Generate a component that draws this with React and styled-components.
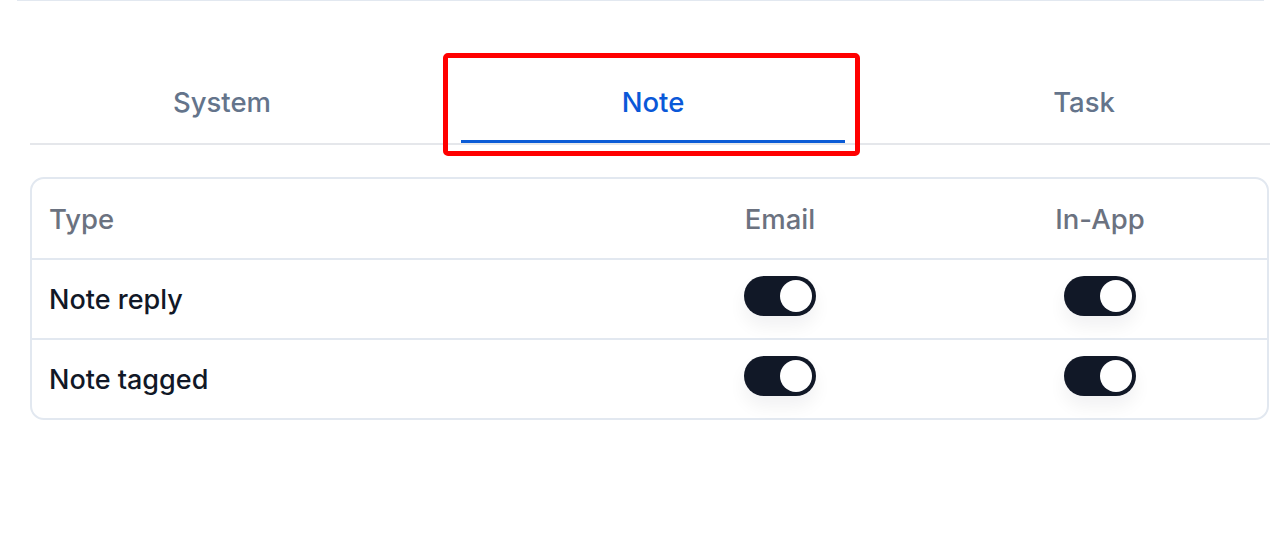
import { useState } from 'react'
import styled, { createGlobalStyle } from 'styled-components'

const GlobalStyle = createGlobalStyle`
    html, body{
        margin: 0;
        padding: 0;
        background: #fff;
        font-family: Inter, "Noto Sans", "Liberation Sans", sans-serif;
    }
`

const tabs = ['System', 'Note', 'Task']

const rows = [
    { label: 'Note reply', email: true, inApp: true },
    { label: 'Note tagged', email: true, inApp: true },
]

const App = () => {
    const [active, setActive] = useState('Note')
    const [settings, setSettings] = useState(rows)

    const flip = (index, key) => {
        setSettings(settings.map((row, i) => i === index ? { ...row, [key]: !row[key] } : row))
    }

    return (
        <Page>
            <GlobalStyle />
            <TopRule />
            <Section>
                <TabList>
                    {tabs.map((tab) => (
                        <Tab key={tab} $active={tab === active} onClick={() => setActive(tab)}>
                            {tab}
                            {tab === active && <Highlight />}
                        </Tab>
                    ))}
                </TabList>
                <Table>
                    <HeadRow>
                        <Cell>Type</Cell>
                        <Center>Email</Center>
                        <Center>In-App</Center>
                    </HeadRow>
                    {settings.map((row, index) => (
                        <Row key={row.label}>
                            <Cell>{row.label}</Cell>
                            <Center>
                                <Switch $on={row.email} onClick={() => flip(index, 'email')}><Knob /></Switch>
                            </Center>
                            <Center>
                                <Switch $on={row.inApp} onClick={() => flip(index, 'inApp')}><Knob /></Switch>
                            </Center>
                        </Row>
                    ))}
                </Table>
            </Section>
        </Page>
    )
}

const Page = styled.div`
    width: 1270px;
    height: 542px;
    overflow: hidden;
`

const TopRule = styled.div`
    height: 1px;
    margin: 0 6px 0 17px;
    background: #e2e8f0;
`

const Section = styled.div`
    padding: 61px 0 0 30px;
`

const TabList = styled.div`
    display: flex;
    gap: 47px;
    border-bottom: 2px solid #e5e7eb;
    margin-right: -60px;
`

const Tab = styled.div`
    position: relative;
    width: 384px;
    flex: none;
    box-sizing: border-box;
    padding: 24px 0 22px;
    line-height: 32px;
    text-align: center;
    font-size: 27.5px;
    font-weight: 500;
    color: ${p => p.$active ? '#0a58d8' : '#64748b'};
    border-bottom: 3px solid ${p => p.$active ? '#0a5bd6' : 'transparent'};
    cursor: pointer;
`

const Highlight = styled.span`
    position: absolute;
    top: -9px;
    left: -18px;
    right: -15px;
    bottom: -16px;
    border: 5px solid #ff0000;
    border-radius: 5px;
    pointer-events: none;
`

const Table = styled.div`
    margin: 32px 1px 0 0;
    border: 2px solid #e2e8f0;
    border-radius: 14px;
`

const Row = styled.div`
    display: grid;
    grid-template-columns: 1fr 320px 320px;
    align-items: center;
    height: 78px;
    padding: 0 7px 0 17px;
    border-top: 2px solid #e2e8f0;
    font-size: 27px;
    font-weight: 500;
    color: #111827;
`

const HeadRow = styled(Row)`
    border-top: none;
    height: 79px;
    font-size: 27.5px;
    color: #6b7280;
`

const Cell = styled.div`
    white-space: nowrap;
`

const Center = styled.div`
    display: flex;
    justify-content: center;
`

const Switch = styled.div`
    width: 72px;
    height: 40px;
    margin-bottom: 6px;
    box-sizing: border-box;
    padding: 4px;
    border-radius: 20px;
    background: ${p => p.$on ? '#111827' : '#e5e7eb'};
    display: flex;
    justify-content: ${p => p.$on ? 'flex-end' : 'flex-start'};
    box-shadow: 0 10px 18px rgba(15, 23, 42, 0.06);
    cursor: pointer;
`

const Knob = styled.div`
    width: 32px;
    height: 32px;
    border-radius: 50%;
    background: #fff;
`

export default App
